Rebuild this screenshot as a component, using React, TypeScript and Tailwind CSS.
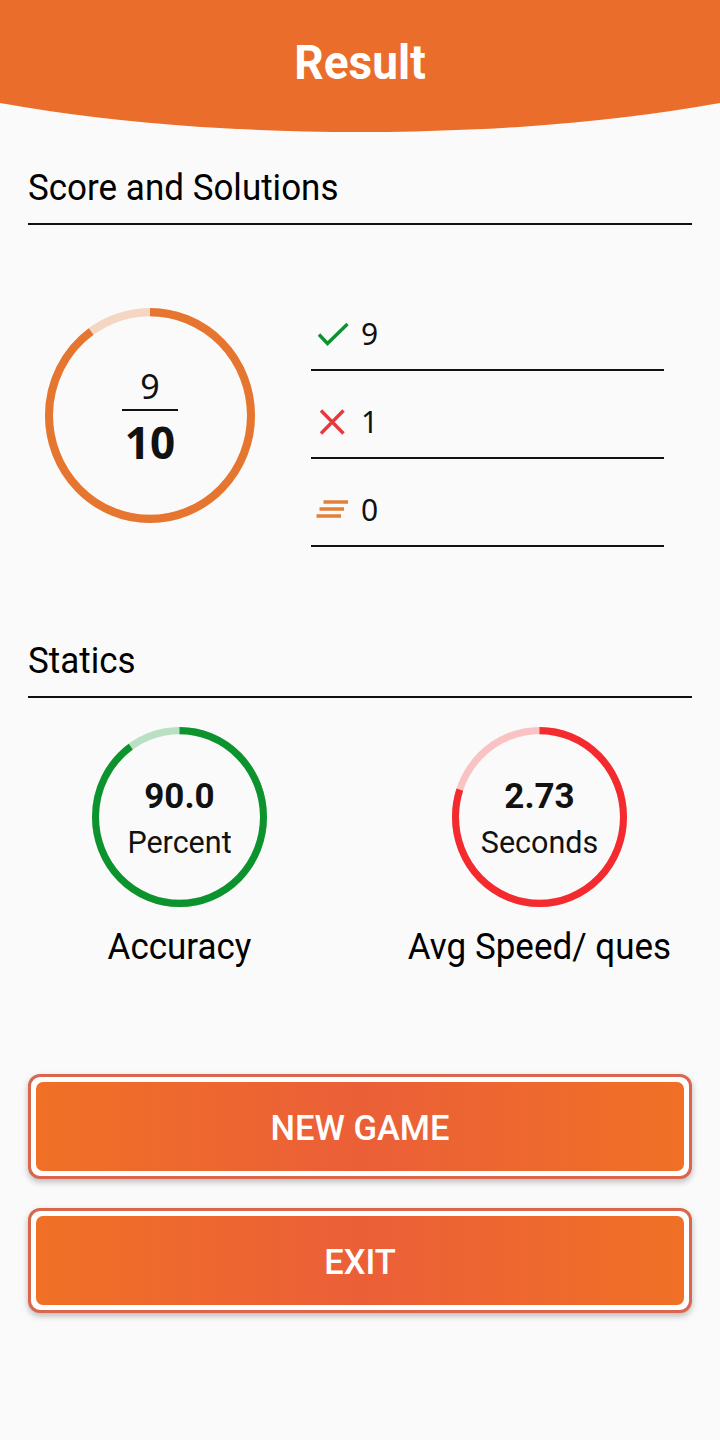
const roboto = "font-['Roboto',sans-serif]";
const noto = "font-['Noto_Sans',sans-serif]";

const Ring = ({
  width,
  height,
  stroke,
  percent,
  color,
  pale,
  children,
}: {
  width: number;
  height: number;
  stroke: number;
  percent: number;
  color: string;
  pale: string;
  children: React.ReactNode;
}) => {
  const mid = width / 2;
  const r = (width - stroke) / 2;
  const c = 2 * Math.PI * r;
  return (
    <div className="grid shrink-0 place-items-center" style={{ width, height }}>
      <svg
        width={width}
        height={height}
        viewBox={`0 0 ${width} ${width}`}
        preserveAspectRatio="none"
        className="col-start-1 row-start-1"
      >
        <circle cx={mid} cy={mid} r={r} fill="none" stroke={pale} strokeWidth={stroke} />
        <circle
          cx={mid}
          cy={mid}
          r={r}
          fill="none"
          stroke={color}
          strokeWidth={stroke}
          strokeDasharray={`${(c * percent) / 100} ${c}`}
          transform={`rotate(-90 ${mid} ${mid})`}
        />
      </svg>
      <div className="col-start-1 row-start-1 flex flex-col items-center">{children}</div>
    </div>
  );
};

const SectionTitle = ({ title }: { title: string }) => (
  <div className="mx-7 h-[58px] border-b-2 border-[#111] text-[35px] leading-[43px] text-black">
    <span className="inline-block scale-y-[1.04]">{title}</span>
  </div>
);

const CountRow = ({ icon, value }: { icon: React.ReactNode; value: number }) => (
  <div className={`flex h-[88px] items-center border-b-2 border-[#111] pt-[16px] ${noto}`}>
    <div className="ml-[5px] flex w-[45px] items-center">{icon}</div>
    <span className="text-[30px] leading-none text-[#111]">{value}</span>
  </div>
);

const GameButton = ({ label }: { label: string }) => (
  <button className="mx-7 block h-[105px] w-[664px] rounded-[12px] border-[3px] border-[#d9664d] bg-white p-[5px] shadow-[0_3px_6px_rgba(0,0,0,0.25)]">
    <span className="flex h-full w-full items-center justify-center rounded-[7px] bg-[linear-gradient(90deg,#f07026_0%,#eb5f38_50%,#f07026_100%)] pt-[5px] text-[34.5px] font-medium text-white">
      {label}
    </span>
  </button>
);

const Stat = ({
  value,
  unit,
  caption,
  percent,
  color,
  pale,
}: {
  value: string;
  unit: string;
  caption: string;
  percent: number;
  color: string;
  pale: string;
}) => (
  <div className="flex w-[359px] flex-col items-center">
    <Ring width={175} height={180} stroke={7} percent={percent} color={color} pale={pale}>
      <span className="mt-[8px] text-[35px] font-bold leading-[44px] text-[#111]">{value}</span>
      <span className="text-[30.5px] leading-[48px] text-[#111]">{unit}</span>
    </Ring>
    <span className="mt-[19px] scale-y-[1.04] text-[35px] leading-[44px] text-black">{caption}</span>
  </div>
);

export default function App() {
  return (
    <div className={`h-[1440px] w-[720px] overflow-hidden bg-[#fafafa] ${roboto}`}>
      <div className="flex h-[132px] items-start justify-center bg-[#eb6d2b] pt-[31px] [clip-path:ellipse(560px_124px_at_50%_8px)]">
        <h1 className="scale-y-[1.04] text-[46px] font-bold leading-[62px] text-white">Result</h1>
      </div>

      <div className="h-[35px]" />
      <SectionTitle title="Score and Solutions" />

      <div className="flex pl-[45px] pt-[83px]">
        <Ring width={210} height={215} stroke={8} percent={90} color="#e6752f" pale="#f4d6c3">
          <span className={`pt-[4px] text-[34px] leading-[45px] text-[#111] ${noto}`}>9</span>
          <span className="h-[2px] w-[56px] bg-[#111]" />
          <span className={`pt-[1px] text-[44px] font-bold leading-[60px] text-[#111] ${noto}`}>10</span>
        </Ring>
        <div className="ml-[56px] mt-[-25px] w-[353px]">
          <CountRow
            value={9}
            icon={
              <svg width="34" height="26" viewBox="0 0 34 26">
                <path d="M3 13.5 L11.5 22.5 L31.5 3" fill="none" stroke="#0e9130" strokeWidth="3.4" />
              </svg>
            }
          />
          <CountRow
            value={1}
            icon={
              <svg width="34" height="26" viewBox="0 0 34 26">
                <path d="M5 1.5 L27.5 24.5 M27.5 1.5 L5 24.5" fill="none" stroke="#e53b3f" strokeWidth="3.4" />
              </svg>
            }
          />
          <CountRow
            value={0}
            icon={
              <svg width="34" height="22" viewBox="0 0 34 22">
                <path
                  d="M7.5 3 H32 M3.5 10 H28 M0.5 17 H25"
                  fill="none"
                  stroke="#e2803a"
                  strokeWidth="3.6"
                />
              </svg>
            }
          />
        </div>
      </div>

      <div className="h-[93px]" />
      <SectionTitle title="Statics" />

      <div className="flex gap-[1px] pt-[29px]">
        <Stat value="90.0" unit="Percent" caption="Accuracy" percent={90} color="#0c932d" pale="#b9e0c2" />
        <Stat value="2.73" unit="Seconds" caption="Avg Speed/ ques" percent={80} color="#f32a2e" pale="#f9c3c4" />
      </div>

      <div className="h-[104px]" />
      <div className="flex flex-col gap-[29px]">
        <GameButton label="NEW GAME" />
        <GameButton label="EXIT" />
      </div>
    </div>
  );
}
